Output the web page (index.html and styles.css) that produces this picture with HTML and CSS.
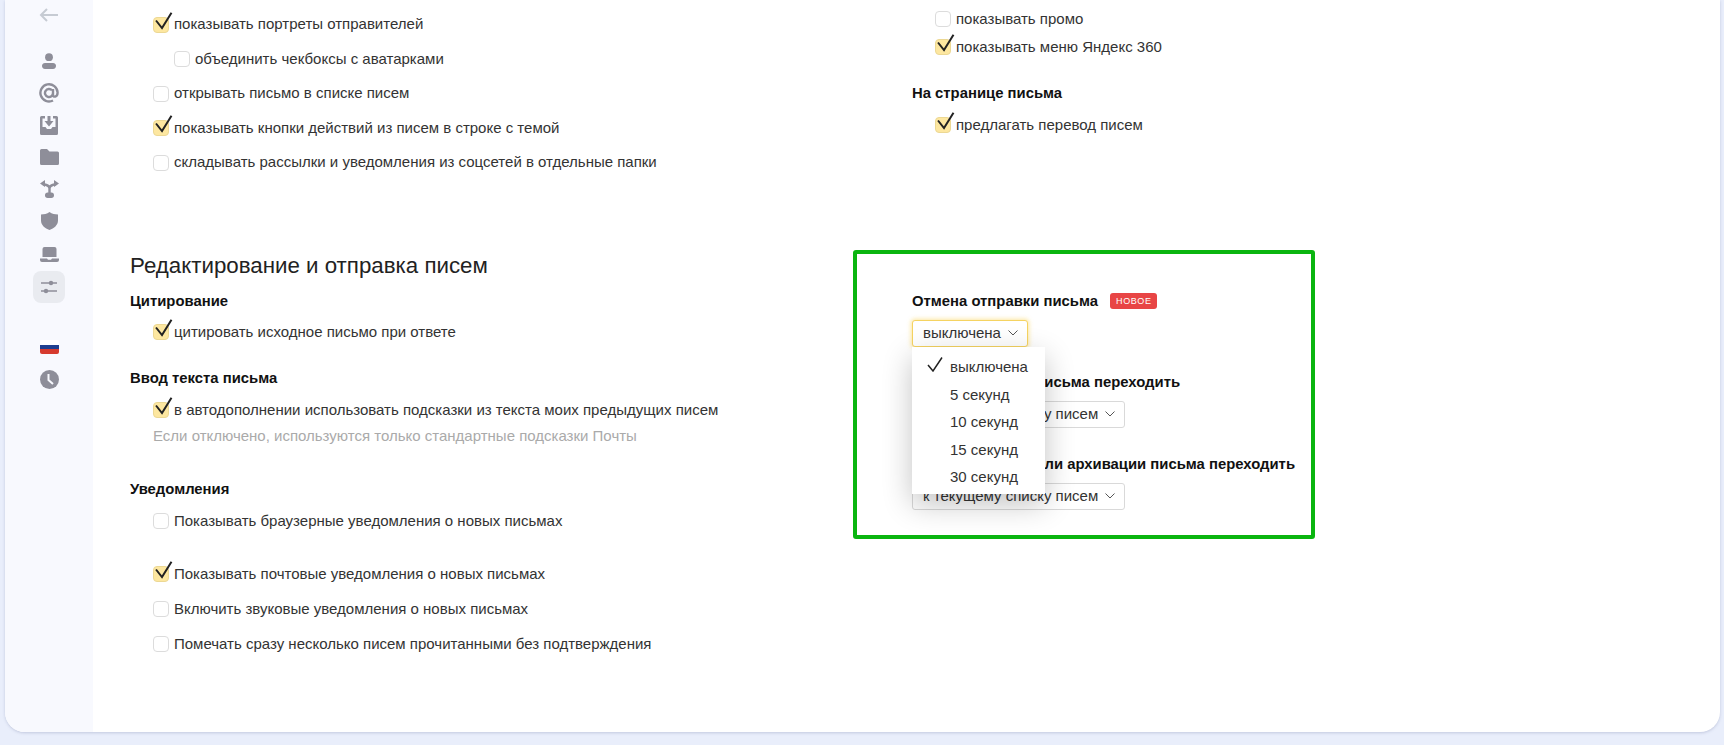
FILE: index.html
```html
<!DOCTYPE html>
<html lang="ru">
<head>
<meta charset="utf-8">
<title>Настройки</title>
<link rel="stylesheet" href="styles.css">
</head>
<body>
<svg class="defs" width="0" height="0" aria-hidden="true">
  <symbol id="tick" viewBox="0 0 19 18"><path d="M2 8.5L8 16L17.5 .8" fill="none" stroke="#222" stroke-width="2"/></symbol>
  <symbol id="chev" viewBox="0 0 10 6"><path d="M.5 .5L5 5L9.5 .5" fill="none" stroke="#555" stroke-width="1"/></symbol>
</svg>
<div class="card">
  <nav class="side">
    <div class="cell back"><svg width="20" height="14" viewBox="0 0 20 14"><path d="M19 7H2M8 1L2 7L8 13" fill="none" stroke="#c6cbd3" stroke-width="2"/></svg></div>
    <div class="cell"><svg width="14" height="16" viewBox="0 0 14 16"><circle cx="7" cy="4.2" r="3.9" fill="#8e8e99"/><path d="M3 10h8c2 0 3 1.400 3 2.900S13 16 11 16H3C1 16 0 14.400 0 12.900S1 10 3 10z" fill="#8e8e99"/></svg></div>
    <div class="cell"><svg width="20" height="20" viewBox="0 0 20 20"><path d="M14 10a4 4 0 1 1-1-2.700M14 6v6c0 2.500 4.600 2.500 4.600-2.500A8.600 8.600 0 1 0 14 17.500" fill="none" stroke="#8e8e99" stroke-width="2.400"/></svg></div>
    <div class="cell"><svg width="18" height="19" viewBox="0 0 18 19"><path d="M1.500 0H5V2.500H2.500V11H5.500L7 13H11L12.500 11H15.500V2.500H13V0H16.500A1.500 1.500 0 0 1 18 1.500V17.500A1.500 1.500 0 0 1 16.500 19H1.500A1.500 1.500 0 0 1 0 17.500V1.500A1.500 1.500 0 0 1 1.500 0Z" fill="#8e8e99"/><path d="M7.500 0H10.500V5H13.500L9 10.500L4.500 5H7.500Z" fill="#8e8e99"/></svg></div>
    <div class="cell"><svg width="19" height="16" viewBox="0 0 19 16"><path d="M1.500 0H7L9.500 2.500H17.500A1.500 1.500 0 0 1 19 4V14.500A1.500 1.500 0 0 1 17.500 16H1.500A1.500 1.500 0 0 1 0 14.500V1.500A1.500 1.500 0 0 1 1.500 0Z" fill="#8e8e99"/></svg></div>
    <div class="cell"><svg width="19" height="18" viewBox="0 0 19 18"><path d="M9.500 13V8.500M9.500 8.500C9.500 5.500 7 5 3 4M9.500 8.500C9.500 5.500 12 5 16 4" fill="none" stroke="#8e8e99" stroke-width="2.400"/><path d="M0 3.500L5 0V7ZM19 3.500L14 0V7Z" fill="#8e8e99"/><rect x="5" y="12.500" width="9" height="5.500" rx="2.700" fill="#8e8e99"/></svg></div>
    <div class="cell"><svg width="17" height="18" viewBox="0 0 17 18"><path d="M8.500 0C11 1.800 14 2.500 17 2.500V8.500C17 13 13 16.500 8.500 18C4 16.500 0 13 0 8.500V2.500C3 2.500 6 1.800 8.500 0Z" fill="#8e8e99"/></svg></div>
    <div class="cell laptop"><svg width="19" height="15" viewBox="0 0 19 15"><path d="M4.500 0H14.500A2 2 0 0 1 16.500 2V10H2.500V2A2 2 0 0 1 4.500 0Z" fill="#8e8e99"/><path d="M0 11.500H7L8 12.700H11L12 11.500H19V13A2 2 0 0 1 17 15H2A2 2 0 0 1 0 13Z" fill="#8e8e99"/></svg></div>
    <div class="cell active"><svg width="16" height="14" viewBox="0 0 16 14"><path d="M0 3H16M0 11H16" stroke="#8e8e99" stroke-width="1.300"/><circle cx="10" cy="3" r="2.200" fill="#8e8e99"/><circle cx="5" cy="11" r="2.200" fill="#8e8e99"/></svg></div>
    <div class="cell flag-cell"><span class="flag"></span></div>
    <div class="cell"><svg width="19" height="19" viewBox="0 0 19 19"><circle cx="9.500" cy="9.500" r="9.500" fill="#8e8e99"/><path d="M8.500 4V10L13 14" fill="none" stroke="#f8f9fe" stroke-width="2"/></svg></div>
  </nav>
  <main class="content">
    <section class="cols top">
      <div class="col left-top">
        <label class="row"><span class="cb on"><svg class="tick"><use href="#tick"/></svg></span>показывать портреты отправителей</label>
        <label class="row sub"><span class="cb"></span>объединить чекбоксы с аватарками</label>
        <label class="row"><span class="cb"></span>открывать письмо в списке писем</label>
        <label class="row"><span class="cb on"><svg class="tick"><use href="#tick"/></svg></span>показывать кнопки действий из писем в строке с темой</label>
        <label class="row"><span class="cb"></span>складывать рассылки и уведомления из соцсетей в отдельные папки</label>
      </div>
      <div class="col right-top">
        <label class="row tight indent"><span class="cb"></span>показывать промо</label>
        <label class="row tight indent"><span class="cb on"><svg class="tick"><use href="#tick"/></svg></span>показывать меню Яндекс 360</label>
        <h3 class="head page-head">На странице письма</h3>
        <label class="row indent under-m"><span class="cb on"><svg class="tick"><use href="#tick"/></svg></span>предлагать перевод писем</label>
      </div>
    </section>
    <h2 class="title">Редактирование и отправка писем</h2>
    <section class="cols">
      <div class="col left-bottom">
        <h3 class="head">Цитирование</h3>
        <label class="row under"><span class="cb on"><svg class="tick"><use href="#tick"/></svg></span>цитировать исходное письмо при ответе</label>
        <h3 class="head block">Ввод текста письма</h3>
        <label class="row under-m"><span class="cb on"><svg class="tick"><use href="#tick"/></svg></span>в автодополнении использовать подсказки из текста моих предыдущих писем</label>
        <p class="hint">Если отключено, используются только стандартные подсказки Почты</p>
        <h3 class="head block notify">Уведомления</h3>
        <label class="row under-m"><span class="cb"></span>Показывать браузерные уведомления о новых письмах</label>
        <label class="row after-gap"><span class="cb on"><svg class="tick"><use href="#tick"/></svg></span>Показывать почтовые уведомления о новых письмах</label>
        <label class="row next"><span class="cb"></span>Включить звуковые уведомления о новых письмах</label>
        <label class="row next"><span class="cb"></span>Помечать сразу несколько писем прочитанными без подтверждения</label>
      </div>
      <div class="col right-bottom">
        <div class="head-line">
          <h3 class="head">Отмена отправки письма</h3>
          <span class="badge">НОВОЕ</span>
        </div>
        <div class="select focus">выключена<svg class="chev"><use href="#chev"/></svg></div>
        <h3 class="head group">После удаления письма переходить</h3>
        <div class="select">к текущему списку писем<svg class="chev"><use href="#chev"/></svg></div>
        <h3 class="head group-l">После удаления или архивации письма переходить</h3>
        <div class="select">к текущему списку писем<svg class="chev"><use href="#chev"/></svg></div>
        <ul class="menu">
          <li class="menu-item"><svg class="menu-tick" viewBox="0 0 16 15"><path d="M1 8L6 14L15 .5" fill="none" stroke="#222" stroke-width="1.500"/></svg>выключена</li>
          <li class="menu-item">5 секунд</li>
          <li class="menu-item">10 секунд</li>
          <li class="menu-item">15 секунд</li>
          <li class="menu-item">30 секунд</li>
        </ul>
        <div class="annotation"></div>
      </div>
    </section>
  </main>
</div>
</body>
</html>
```
FILE: styles.css
```css
* { box-sizing: border-box; }
html, body { height: 100%; }
body {
  margin: 0;
  height: 745px;
  overflow: hidden;
  padding: 0 4px 13px 5px;
  background: #e9eefb;
  font-family: "Liberation Sans", Arial, sans-serif;
  font-size: 15px;
  color: #333;
}
.defs { position: absolute; }
.card {
  display: flex;
  height: 732px;
  background: #fff;
  border-radius: 0 0 20px 20px;
  box-shadow: 0 1px 3px rgba(120, 130, 170, .35);
  overflow: hidden;
}
.side {
  flex: 0 0 88px;
  display: flex;
  flex-direction: column;
  align-items: center;
  background: #f8f9fe;
}
.cell {
  width: 32px;
  height: 32px;
  flex: none;
  display: flex;
  align-items: center;
  justify-content: center;
}
.back { height: 30px; margin-bottom: 15px; }
.laptop { margin-top: 1px; }
.active { margin-top: 1px; background: #e9ebf0; border-radius: 8px; }
.flag-cell { margin-top: 28px; }
.flag {
  width: 19px;
  height: 14px;
  border-radius: 2px;
  background: linear-gradient(#fff 0 33%, #1f3f8f 33% 66%, #d63a2e 66%);
}
.content { flex: 1; padding-left: 37px; }
.cols { display: grid; grid-template-columns: 782px 1fr; }
.top { height: 172px; }
.left-top { padding-top: 14.500px; }
.right-top { padding-top: 9px; }
.row {
  display: flex;
  align-items: center;
  gap: 5px;
  height: 20px;
  padding-bottom: 2px;
  margin: 0 0 14.500px 23px;
  white-space: nowrap;
}
.sub { margin-left: 44px; }
.tight { margin-bottom: 8px; }
.indent { margin-left: 23px; }
.under { margin-bottom: 0; margin-top: 11px; }
.under-m { margin-bottom: 0; margin-top: 12px; }
.after-gap { margin: 33px 0 0 23px; }
.next { margin: 15px 0 0 23px; }
.cb {
  position: relative;
  flex: none;
  width: 16px;
  height: 16px;
  margin-top: 2px;
  background: #fff;
  border: 1px solid #dcdcdc;
  border-radius: 4px;
}
.cb.on { background: #fde7a0; border-color: #ecd894; }
.tick {
  position: absolute;
  left: 0;
  top: -6px;
  width: 19px;
  height: 18px;
}
.head {
  margin: 0;
  font-size: 14.850px;
  line-height: 20px;
  font-weight: 700;
  color: #111;
  white-space: nowrap;
}
.page-head { margin-top: 26px; }
.title {
  margin: 80px 0 0;
  height: 39px;
  font-size: 22.300px;
  line-height: 28px;
  font-weight: 400;
  color: #222;
}
.block { margin-top: 26px; }
.notify { margin-top: 33px; }
.hint {
  margin: 6px 0 0 23px;
  line-height: 20px;
  color: #aaa;
  white-space: nowrap;
}
.right-bottom { position: relative; }
.head-line { display: flex; align-items: center; gap: 12.500px; }
.badge {
  height: 16px;
  padding: 0 5.500px;
  border-radius: 3px;
  background: #e84545;
  color: #fff;
  font-size: 9px;
  line-height: 17px;
  letter-spacing: .7px;
}
.select {
  display: flex;
  align-items: center;
  justify-content: space-between;
  width: 213px;
  height: 27px;
  margin-top: 9px;
  padding: 0 9px 2px 10px;
  background: #fff;
  border: 1px solid #d9d9d9;
  border-radius: 3px;
  white-space: nowrap;
}
.focus {
  width: 116px;
  border-color: #f5d361;
  box-shadow: 0 0 4px 1px rgba(250, 210, 80, .55);
}
.chev { flex: none; width: 10px; height: 6px; }
.group { margin-top: 25px; }
.group-l { margin-top: 26px; }
.menu {
  position: absolute;
  left: 0;
  top: 56px;
  z-index: 2;
  width: 133px;
  height: 147px;
  margin: 0;
  padding: 6px 0 0;
  list-style: none;
  background: #fff;
  box-shadow: 0 10px 28px rgba(0, 0, 0, .24);
}
.menu-item {
  position: relative;
  height: 27.500px;
  padding-left: 38px;
  line-height: 27.500px;
}
.menu-tick {
  position: absolute;
  left: 15px;
  top: 4px;
  width: 16px;
  height: 15px;
}
.annotation {
  position: absolute;
  left: -59px;
  top: -41px;
  z-index: 3;
  width: 462px;
  height: 289px;
  border: 4px solid #0ab510;
  border-radius: 3px;
  pointer-events: none;
}
```
